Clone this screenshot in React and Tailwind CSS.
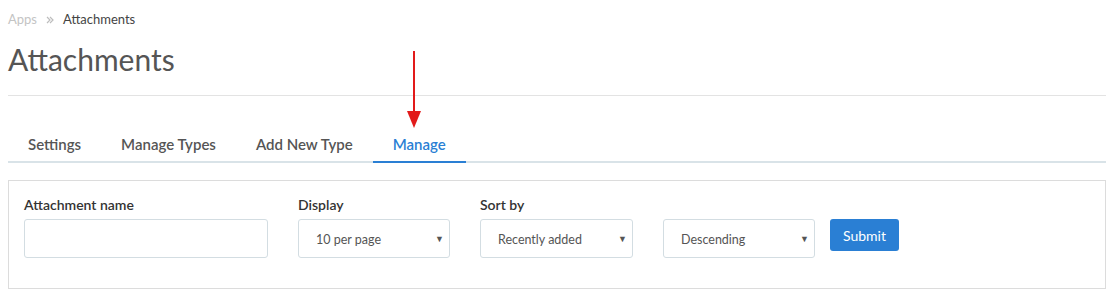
import React from "react";

const TABS = ["Settings", "Manage Types", "Add New Type", "Manage"];

function Select({ value, width }) {
    return (
        <div className={`relative flex items-center h-[39px] ${width} border border-[#d3dde2] rounded-[3px] bg-white pl-[17px] pt-[3px] text-[12.5px] text-[#555]`}>
            {value}
            <span className="absolute right-[5px] top-[12px] text-[9px] text-[#555]">▼</span>
        </div>
    );
}

export default function App() {
    return (
        <div className="w-[1114px] h-[306px] bg-white px-2 pt-[11px] text-[#333]" style={{ fontFamily: "Lato, 'Open Sans', sans-serif" }}>
            {/* breadcrumb */}
            <div className="flex items-center text-[13px] h-[18px]">
                <span className="text-[#c4c4c4]">Apps</span>
                <svg className="mx-[9px]" width="8" height="8" viewBox="0 0 8 8">
                    <path d="M1 1l3 3-3 3M4 1l3 3-3 3" fill="none" stroke="#bdbdbd" strokeWidth="1.2" />
                </svg>
                <span className="text-[#444]">Attachments</span>
            </div>
            <h1 className="text-[30px] leading-[40px] mt-[10px] text-[#555] font-normal">Attachments</h1>
            <div className="mt-[16px] border-t border-[#e3e3e3]" />

            {/* tabs */}
            <div className="relative mt-[30px] flex border-b-2 border-[#d9e3e8] h-[37px]">
                {TABS.map((tab) => (
                    <div
                        key={tab}
                        className={`relative px-[20px] pt-[7px] text-[15px] font-semibold -mb-[2px] ${tab === "Manage" ? "text-[#2a7fd4] border-b-2 border-[#2a7fd4]" : "text-[#555] border-b-2 border-transparent"}`}
                    >
                        {tab}
                        {tab === "Manage" && (
                            <svg className="absolute left-[33px] -top-[75px]" width="16" height="78" viewBox="0 0 16 78">
                                <line x1="8" y1="0" x2="8" y2="62" stroke="#e21a1a" strokeWidth="2" />
                                <polygon points="1,60 15,60 8,77" fill="#e21a1a" />
                            </svg>
                        )}
                    </div>
                ))}
            </div>

            {/* filter panel */}
            <div className="mt-[17px] border border-[#dcdcdc] px-[15px] pt-[14px] pb-[30px] flex items-start gap-[30px]">
                <div className="flex flex-col">
                    <label className="text-[14px] font-semibold leading-[20px] mb-[4px]">Attachment name</label>
                    <div className="w-[244px] h-[39px] border border-[#d3dde2] rounded-[3px]" />
                </div>
                <div className="flex flex-col">
                    <label className="text-[14px] font-semibold leading-[20px] mb-[4px]">Display</label>
                    <Select value="10 per page" width="w-[152px]" />
                </div>
                <div className="flex flex-col">
                    <label className="text-[14px] font-semibold leading-[20px] mb-[4px]">Sort by</label>
                    <Select value="Recently added" width="w-[153px]" />
                </div>
                <div className="flex items-start gap-[15px] pt-[24px]">
                    <Select value="Descending" width="w-[152px]" />
                    <button className="h-[32px] px-[13px] bg-[#2a7fd4] text-white text-[14px] rounded-[3px]">Submit</button>
                </div>
            </div>
        </div>
    );
}
